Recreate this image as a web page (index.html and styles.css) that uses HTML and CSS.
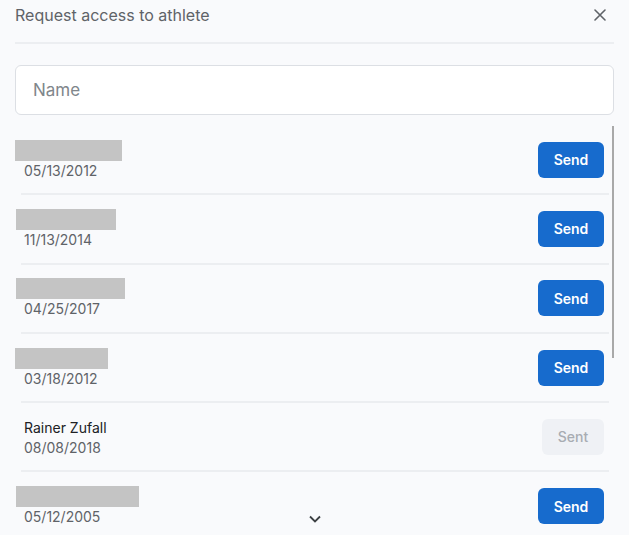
FILE: index.html
```html
<!DOCTYPE html>
<html>
<head>
<meta charset="utf-8">
<link rel="stylesheet" href="styles.css">
</head>
<body>
<div class="dialog">
  <div class="header">
    <span class="title">Request access to athlete</span>
    <svg class="close" width="12" height="12" viewBox="0 0 12 12"><path d="M1 1L11 11M11 1L1 11" stroke="#5f6368" stroke-width="1.6" fill="none" stroke-linecap="round"/></svg>
  </div>
  <input class="search" type="text" placeholder="Name">
  <div class="list-wrap">
    <div class="list">
      <div class="row">
        <div class="info">
          <div class="redact" style="width:107px;margin-left:-9px"></div>
          <div class="date">05/13/2012</div>
        </div>
        <button class="btn send">Send</button>
      </div>
      <div class="row">
        <div class="info">
          <div class="redact" style="width:100px;margin-left:-8px"></div>
          <div class="date">11/13/2014</div>
        </div>
        <button class="btn send">Send</button>
      </div>
      <div class="row">
        <div class="info">
          <div class="redact" style="width:109px;margin-left:-8px"></div>
          <div class="date">04/25/2017</div>
        </div>
        <button class="btn send">Send</button>
      </div>
      <div class="row">
        <div class="info">
          <div class="redact" style="width:95px;margin-left:-11px"></div>
          <div class="date">03/18/2012</div>
        </div>
        <button class="btn send">Send</button>
      </div>
      <div class="row">
        <div class="info">
          <div class="name">Rainer Zufall</div>
          <div class="date">08/08/2018</div>
        </div>
        <button class="btn sent">Sent</button>
      </div>
      <div class="row">
        <div class="info">
          <div class="redact" style="width:123px;margin-left:-8px"></div>
          <div class="date">05/12/2005</div>
        </div>
        <button class="btn send">Send</button>
      </div>
    </div>
    <div class="scrollbar"></div>
    <svg class="more" width="12" height="8" viewBox="0 0 12 8"><path d="M1 1.5L6 6.5L11 1.5" stroke="#3c4043" stroke-width="1.8" fill="none"/></svg>
  </div>
</div>
</body>
</html>
```
FILE: styles.css
```css
html, body {
  margin: 0;
  padding: 0;
  background: #f9fafc;
  height: 100%;
  overflow: hidden;
}
body {
  font-family: Inter, "Noto Sans", sans-serif;
}
.dialog {
  padding: 0 14px 0 15px;
  display: flex;
  flex-direction: column;
  height: 535px;
  box-sizing: border-box;
}
.header {
  display: flex;
  align-items: center;
  justify-content: space-between;
  height: 30px;
  padding: 0 10px 12px 0;
  margin-right: 1px;
  border-bottom: 2px solid #eceef1;
}
.title {
  font-size: 16px;
  color: #5f6368;
}
.close {
  display: block;
  margin-right: -2px;
}
.search {
  margin: 21px 1px 0 0;
  height: 50px;
  box-sizing: border-box;
  border: 1px solid #dcdfe4;
  border-radius: 6px;
  background: #fff;
  padding: 0 17px;
  font-family: Inter, "Noto Sans", sans-serif;
  font-size: 17px;
  color: #202124;
  outline: none;
}
.search::placeholder {
  color: #80868b;
}
.list-wrap {
  position: relative;
  flex: 1;
  overflow: hidden;
  margin-top: 11px;
}
.list {
  margin: 0 6px 0 6px;
}
.row {
  display: flex;
  align-items: center;
  justify-content: space-between;
  height: 67.3px;
  padding: 0 5px 0 3px;
  border-bottom: 2px solid #eceef1;
}
.info {
  display: flex;
  flex-direction: column;
  align-items: flex-start;
  padding-top: 1px;
}
.redact {
  height: 21px;
  background: #c4c4c4;
}
.name {
  font-size: 14px;
  line-height: 21px;
  color: #202124;
}
.date {
  font-size: 14px;
  line-height: 20px;
  color: #5f6368;
}
.btn {
  height: 36px;
  border: none;
  border-radius: 6px;
  font-family: Inter, "Noto Sans", sans-serif;
  font-size: 14px;
  font-weight: 600;
  padding: 0;
}
.send {
  width: 66px;
  background: #176bcd;
  color: #fff;
}
.sent {
  width: 62px;
  background: #eff1f5;
  color: #a8acb2;
  font-weight: 500;
}
.scrollbar {
  position: absolute;
  top: 0;
  right: 1px;
  width: 2px;
  height: 232px;
  background: #a9a9a9;
}
.more {
  position: absolute;
  left: 294px;
  bottom: 12px;
}
```
